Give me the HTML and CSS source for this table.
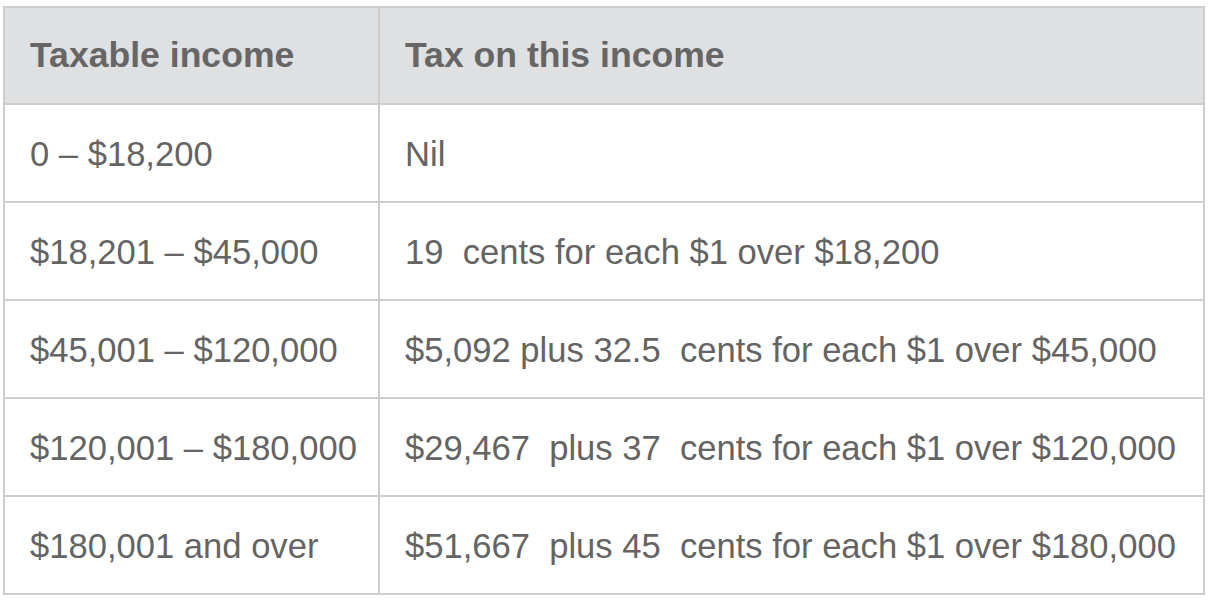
FILE: index.html
```html
<!DOCTYPE html>
<html>
<head>
<meta charset="utf-8">
<link rel="stylesheet" href="styles.css">
</head>
<body>
<table class="tax">
  <thead>
    <tr><th class="c1">Taxable income</th><th>Tax on this income</th></tr>
  </thead>
  <tbody>
    <tr><td>0 – $18,200</td><td>Nil</td></tr>
    <tr><td>$18,201 – $45,000</td><td>19  cents for each $1 over $18,200</td></tr>
    <tr><td>$45,001 – $120,000</td><td>$5,092 plus 32.5  cents for each $1 over $45,000</td></tr>
    <tr><td>$120,001 – $180,000</td><td>$29,467  plus 37  cents for each $1 over $120,000</td></tr>
    <tr><td>$180,001 and over</td><td>$51,667  plus 45  cents for each $1 over $180,000</td></tr>
  </tbody>
</table>
</body>
</html>
```
FILE: styles.css
```css
html, body { margin: 0; padding: 0; background: #fff; }
body { padding: 6px 0 0 3px; font-family: "Liberation Sans", Arial, sans-serif; }
.tax {
  border-collapse: collapse;
  width: 1202px;
  table-layout: fixed;
}
.tax th, .tax td {
  border: 2px solid #cdcdcd;
  padding: 0 0 0 25px;
  text-align: left;
  white-space: pre;
  vertical-align: middle;
}
.tax th {
  background: #dee0e1;
  color: #666;
  font-weight: bold;
  font-size: 35.6px;
  height: 95px;
}
.tax th.c1 { width: 348px; }
.tax td {
  color: #646464;
  font-size: 34.6px;
  height: 93px;
  padding-top: 3px;
}
```
